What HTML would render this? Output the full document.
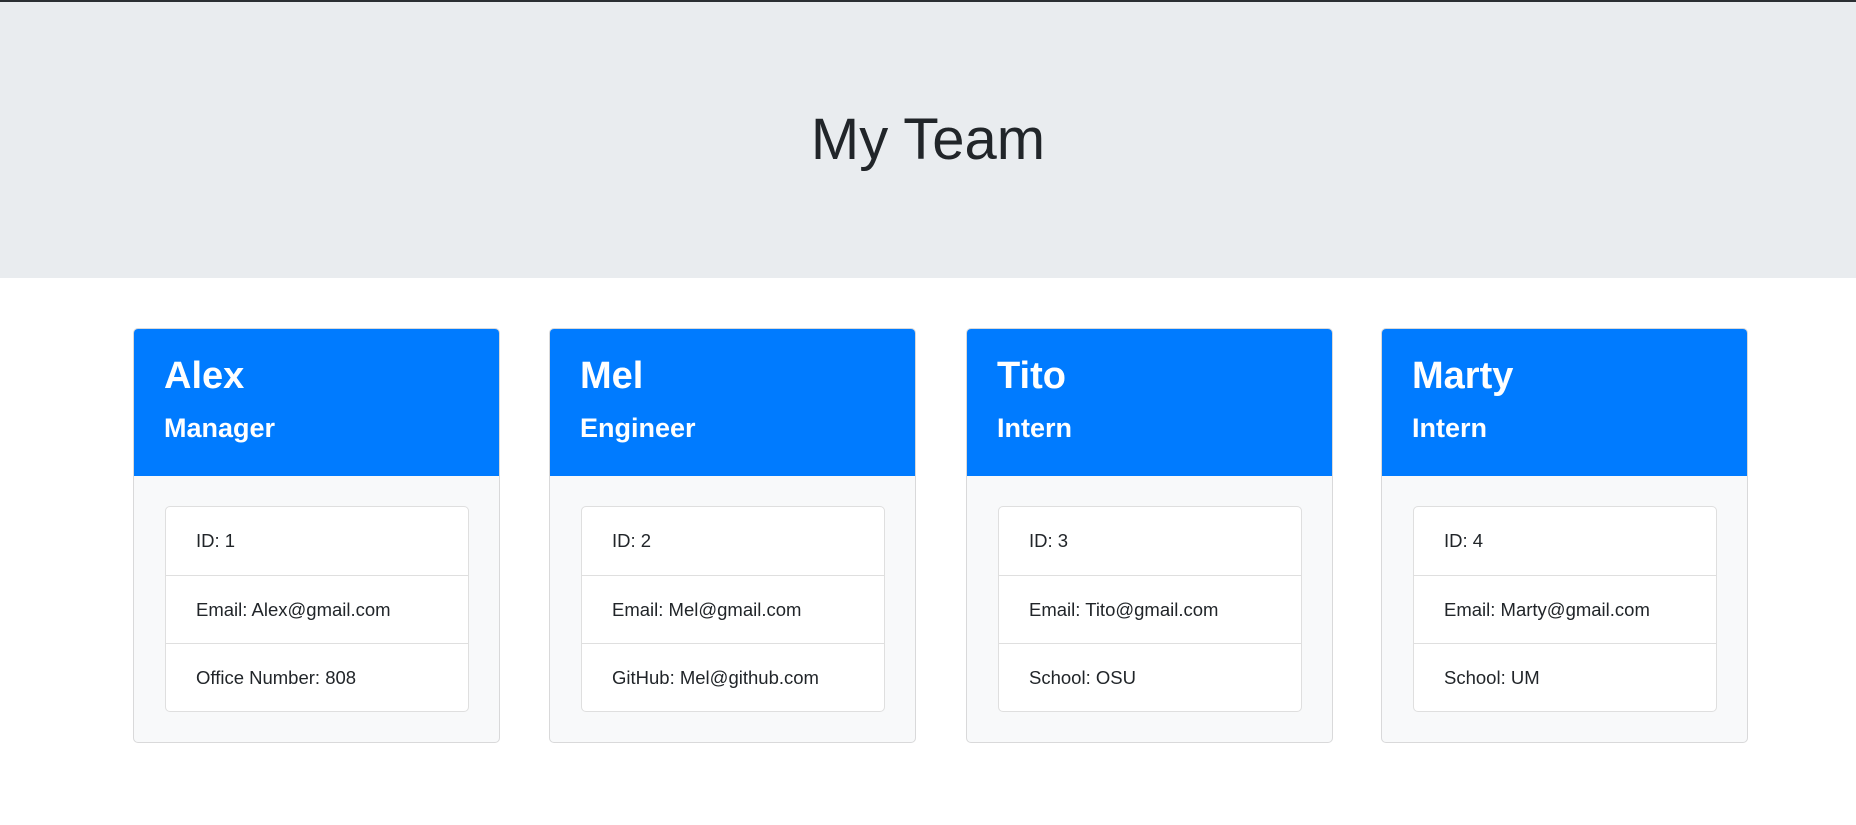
<!DOCTYPE html>
<html><head><meta charset="utf-8"><style>
*{box-sizing:border-box;margin:0;padding:0}
body{width:1856px;height:825px;background:#fff;font-family:"Liberation Sans",sans-serif;color:#212529;position:relative;overflow:hidden}
.top{position:absolute;left:0;top:0;width:1856px;height:2px;background:#2b2f33}
.jumbo{position:absolute;left:0;top:2px;width:1856px;height:276px;background:#e9ecef}
h1{position:absolute;left:0;width:1856px;top:105px;text-align:center;font-size:58px;line-height:70px;font-weight:normal}
.card{position:absolute;top:328px;width:367px;height:415px;border:1px solid rgba(0,0,0,.125);border-radius:5px;background:#f8f9fa;overflow:hidden}
.hd{position:absolute;left:0;top:0;width:100%;height:147px;background:#007bff;color:#fff}
.nm{position:absolute;left:30px;top:24px;font-size:38px;line-height:46px;font-weight:bold}
.rl{position:absolute;left:30px;top:82px;font-size:27px;line-height:34px;font-weight:bold}
.ls{position:absolute;left:31px;top:177px;width:304px;height:206px;background:#fff;border:1px solid rgba(0,0,0,.125);border-radius:5px}
.ls div{height:68px;border-top:1px solid rgba(0,0,0,.125);padding-left:30px;font-size:18.5px;display:flex;align-items:center}
.ls div:first-child{border-top:none}
</style></head><body>
<div class="top"></div><div class="jumbo"></div>
<h1>My Team</h1>
<div class="card" style="left:133px"><div class="hd"><div class="nm">Alex</div><div class="rl">Manager</div></div>
<div class="ls"><div>ID: 1</div><div>Email: Alex@gmail.com</div><div>Office Number: 808</div></div></div>
<div class="card" style="left:549px"><div class="hd"><div class="nm">Mel</div><div class="rl">Engineer</div></div>
<div class="ls"><div>ID: 2</div><div>Email: Mel@gmail.com</div><div>GitHub: Mel@github.com</div></div></div>
<div class="card" style="left:966px"><div class="hd"><div class="nm">Tito</div><div class="rl">Intern</div></div>
<div class="ls"><div>ID: 3</div><div>Email: Tito@gmail.com</div><div>School: OSU</div></div></div>
<div class="card" style="left:1381px"><div class="hd"><div class="nm">Marty</div><div class="rl">Intern</div></div>
<div class="ls"><div>ID: 4</div><div>Email: Marty@gmail.com</div><div>School: UM</div></div></div>
</body></html>
